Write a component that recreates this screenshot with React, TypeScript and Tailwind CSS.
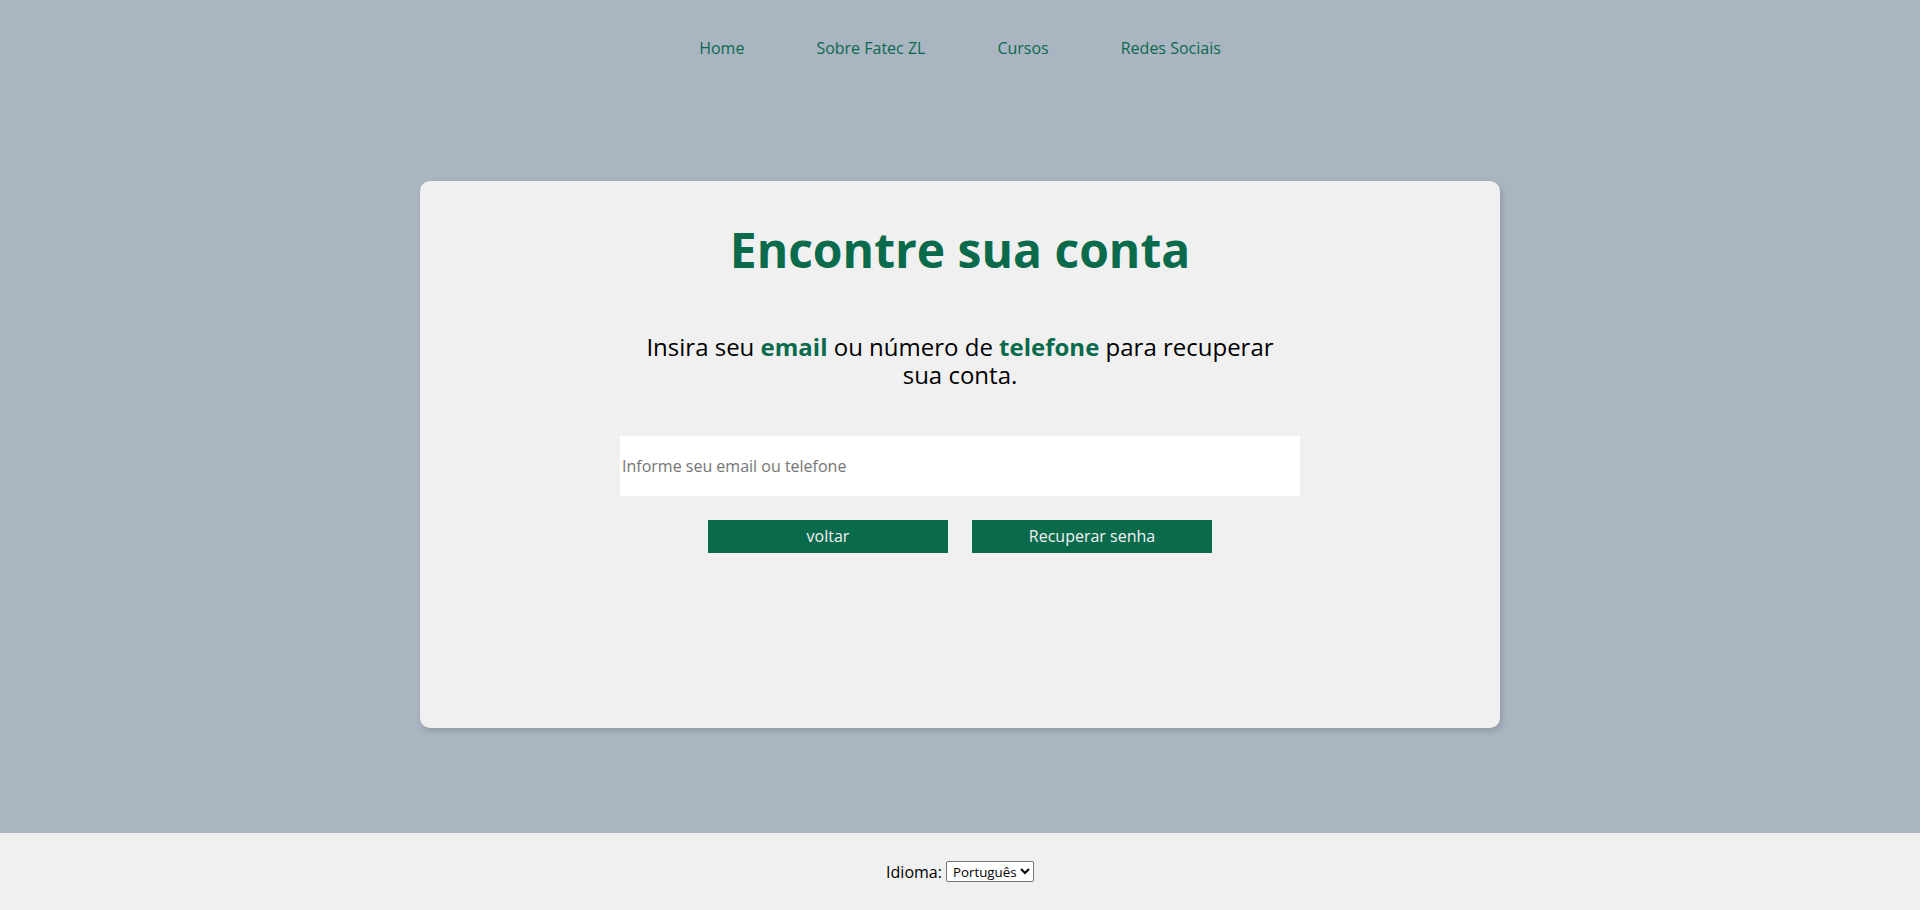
import { useState } from "react";

const NAV_LINKS = ["Home", "Sobre Fatec ZL", "Cursos", "Redes Sociais"];

export default function App() {
  const [contato, setContato] = useState("");
  const [idioma, setIdioma] = useState("pt");

  return (
    <div className="flex h-[910px] flex-col bg-[#aab5c2] font-['Open_Sans',sans-serif]">
      <div className="flex-1">
        <nav className="flex justify-center gap-[72px] pt-[37px]">
          {NAV_LINKS.map((link) => (
            <a key={link} href="#" className="text-[16px] leading-[22px] text-[#0b6a4d]">
              {link}
            </a>
          ))}
        </nav>

        <main className="mx-auto mt-[122px] flex h-[547px] w-[1080px] flex-col items-center rounded-[10px] bg-[#f0f0f0] pt-[36px] shadow-[2px_3px_6px_rgba(0,0,0,0.15)]">
          <h1 className="text-[48px] leading-[65px] font-bold text-[#0a6a4c]">Encontre sua conta</h1>

          <p className="mt-[51px] w-[650px] text-center text-[24px] leading-[28px] text-black">
            Insira seu <strong className="font-bold text-[#0a6a4c]">email</strong> ou número de{" "}
            <strong className="font-bold text-[#0a6a4c]">telefone</strong> para recuperar sua conta.
          </p>

          <input
            className="mt-[47px] h-[60px] w-[680px] bg-white px-[2px] text-[16px] text-black outline-none placeholder:text-[#757575]"
            placeholder="Informe seu email ou telefone"
            value={contato}
            onChange={(event) => setContato(event.target.value)}
          />

          <div className="mt-[24px] flex gap-[24px]">
            <button
              type="button"
              className="h-[33px] w-[240px] bg-[#0a6a4c] pb-[2px] text-[16px] text-[#f3f3f3]"
            >
              voltar
            </button>
            <button
              type="button"
              className="h-[33px] w-[240px] bg-[#0a6a4c] pb-[2px] text-[16px] text-[#f3f3f3]"
            >
              Recuperar senha
            </button>
          </div>
        </main>
      </div>

      <footer className="flex h-[77px] items-center justify-center gap-[4px] bg-[#f0f0f0] text-[16px] text-black">
        <span>Idioma:</span>
        <select
          className="h-[21px] rounded-[2px] border border-[#767676] bg-white pl-[2px] text-[13.33px] leading-[17px]"
          value={idioma}
          onChange={(event) => setIdioma(event.target.value)}
        >
          <option value="pt">Português</option>
          <option value="en">English</option>
          <option value="es">Español</option>
        </select>
      </footer>
    </div>
  );
}
